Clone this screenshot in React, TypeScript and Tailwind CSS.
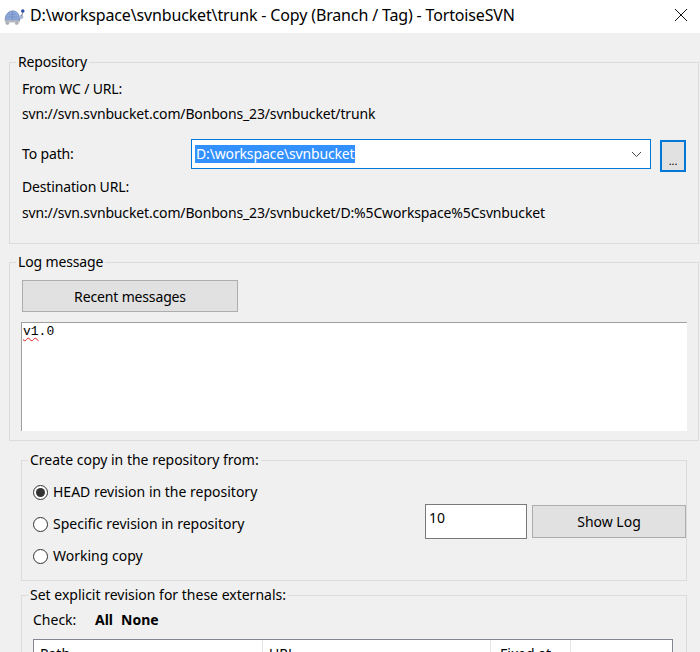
import React from 'react'

function TortoiseIcon() {
  return (
    <svg width="22" height="18" viewBox="0 0 20 16">
      <ellipse cx="13.5" cy="10" rx="2.2" ry="1.8" fill="#9aa4b4" />
      <path d="M2 11 C2 4.5 6 2.5 9 2.5 C12 2.5 15 4.5 15 11 Z" fill="#8fa9dc" stroke="#6f86b8" strokeWidth="0.8" />
      <path d="M4 8 L13 8 M5 5.5 L12 5.5 M8.5 3 L8.5 11" stroke="#6f86b8" strokeWidth="0.6" />
      <rect x="1.5" y="11" width="14" height="2" rx="1" fill="#b6b9c0" />
      <ellipse cx="4" cy="13.8" rx="1.6" ry="1.2" fill="#a7abb3" />
      <ellipse cx="12.5" cy="13.8" rx="1.6" ry="1.2" fill="#a7abb3" />
      <ellipse cx="16.5" cy="8" rx="2" ry="1.8" fill="#a8b6d6" />
      <circle cx="18" cy="2.5" r="1.6" fill="#2a4fa8" />
      <path d="M17 7 L18 3.5" stroke="#5a6a8a" strokeWidth="0.8" />
    </svg>
  )
}

function Radio({ checked, label }: { checked?: boolean; label: string }) {
  return (
    <div className="flex items-center">
      <span className="w-[15px] h-[15px] rounded-full border border-[#333] bg-white flex items-center justify-center">
        {checked && <span className="w-[9px] h-[9px] rounded-full bg-[#333]" />}
      </span>
      <span className="ml-[5px] leading-[20px]">{label}</span>
    </div>
  )
}

export default function App() {
  return (
    <div className="w-[700px] h-[652px] overflow-hidden bg-[#f0f0f0] font-['Noto_Sans',sans-serif] text-[14px] tracking-[-0.15px] text-black">
      {/* barra de título */}
      <div className="h-[33px] bg-white flex items-center pl-[3px] pr-[12px]">
        <TortoiseIcon />
        <span className="ml-[5px] text-[16px] leading-[20px] -mt-[3px]">
          D:\workspace\svnbucket\trunk - Copy (Branch / Tag) - TortoiseSVN
        </span>
        <svg className="ml-auto -mt-[4px]" width="14" height="14" viewBox="0 0 14 14">
          <path d="M1 1 L13 13 M13 1 L1 13" stroke="#111" strokeWidth="1" />
        </svg>
      </div>

      {/* Repository */}
      <fieldset className="mt-[19px] ml-[9px] w-[690px] border border-[#dcdcdc] pl-[6px] pb-[20px]">
        <legend className="px-[2px] leading-[20px]">Repository</legend>
        <div className="pl-[6px]">
          <div className="mt-[7px] leading-[20px]">From WC / URL:</div>
          <div className="mt-[5px] leading-[20px]">svn://svn.svnbucket.com/Bonbons_23/svnbucket/trunk</div>
          <div className="mt-[15px] h-[33px] flex items-start">
            <div className="w-[169px] leading-[30px]">To path:</div>
            <div className="w-[460px] h-[30px] border border-[#0078d7] bg-white flex items-center pl-[3px] pr-[8px]">
              <span className="bg-[#3391ff] text-white leading-[18px] px-[1px]">D:\workspace\svnbucket</span>
              <svg className="ml-auto" width="11" height="7" viewBox="0 0 11 7">
                <path d="M1 1 L5.5 5.5 L10 1" fill="none" stroke="#444" strokeWidth="1" />
              </svg>
            </div>
            <button className="ml-[9px] mt-[1px] w-[26px] h-[32px] border-2 border-[#0078d7] bg-[#e1e1e1] text-[11px] leading-none pt-[8px]">
              ...
            </button>
          </div>
          <div className="mt-[5px] leading-[20px]">Destination URL:</div>
          <div className="mt-[6px] leading-[20px]">svn://svn.svnbucket.com/Bonbons_23/svnbucket/D:%5Cworkspace%5Csvnbucket</div>
        </div>
      </fieldset>

      {/* Log message */}
      <fieldset className="mt-[8px] ml-[9px] w-[690px] border border-[#dcdcdc] pl-[6px] pb-[9px]">
        <legend className="px-[2px] leading-[20px]">Log message</legend>
        <div className="pl-[6px]">
          <button className="mt-[8px] w-[216px] h-[32px] border border-[#adadad] bg-[#e1e1e1] text-[14px]">
            Recent messages
          </button>
          <div className="mt-[10px] -ml-px w-[666px] h-[109px] bg-white border-t border-l border-[#a0a0a0] px-[1px] font-['Liberation_Mono',monospace] text-[13px] tracking-normal leading-[18px]">
            <span className="underline decoration-wavy decoration-[#e02020] decoration-1 underline-offset-2">v1</span>.0
          </div>
        </div>
      </fieldset>

      {/* Create copy */}
      <fieldset className="mt-[9px] ml-[21px] w-[666px] border border-[#dcdcdc] pl-[6px] pb-[8px] tracking-normal">
        <legend className="px-[2px] leading-[20px]">Create copy in the repository from:</legend>
        <div className="pl-[5px] mt-[6px]">
          <div className="h-[32px] flex items-center">
            <Radio checked label="HEAD revision in the repository" />
          </div>
          <div className="h-[32px] flex items-center">
            <Radio label="Specific revision in repository" />
            <div className="ml-auto -mt-[5px] flex items-center gap-[5px]">
              <div className="w-[102px] h-[35px] border border-[#7a7a7a] bg-white pl-[3px] pt-[3px] leading-[20px]">10</div>
              <button className="w-[154px] h-[33px] border border-[#adadad] bg-[#e1e1e1]">Show Log</button>
            </div>
          </div>
          <div className="h-[32px] flex items-center">
            <Radio label="Working copy" />
          </div>
        </div>
      </fieldset>

      {/* Externals */}
      <fieldset className="mt-[4px] ml-[21px] w-[666px] border border-[#dcdcdc] pl-[6px] tracking-normal">
        <legend className="px-[2px] leading-[20px]">Set explicit revision for these externals:</legend>
        <div className="pl-[5px]">
          <div className="mt-[5px] flex leading-[20px]">
            <span className="w-[62px]">Check:</span>
            <span className="font-bold">All</span>
            <span className="ml-[8px] font-bold">None</span>
          </div>
          <div className="mt-[9px] w-[640px] h-[60px] border border-[#828790] bg-white flex">
            <div className="w-[229px] h-[24px] border-r border-[#e5e5e5] pl-[6px] pt-[4px] leading-[20px]">Path</div>
            <div className="w-[228px] h-[24px] border-r border-[#e5e5e5] pl-[6px] pt-[4px] leading-[20px]">URL</div>
            <div className="w-[80px] h-[24px] border-r border-[#e5e5e5] pl-[9px] pt-[4px] leading-[20px]">Fixed at</div>
          </div>
        </div>
      </fieldset>
    </div>
  )
}
